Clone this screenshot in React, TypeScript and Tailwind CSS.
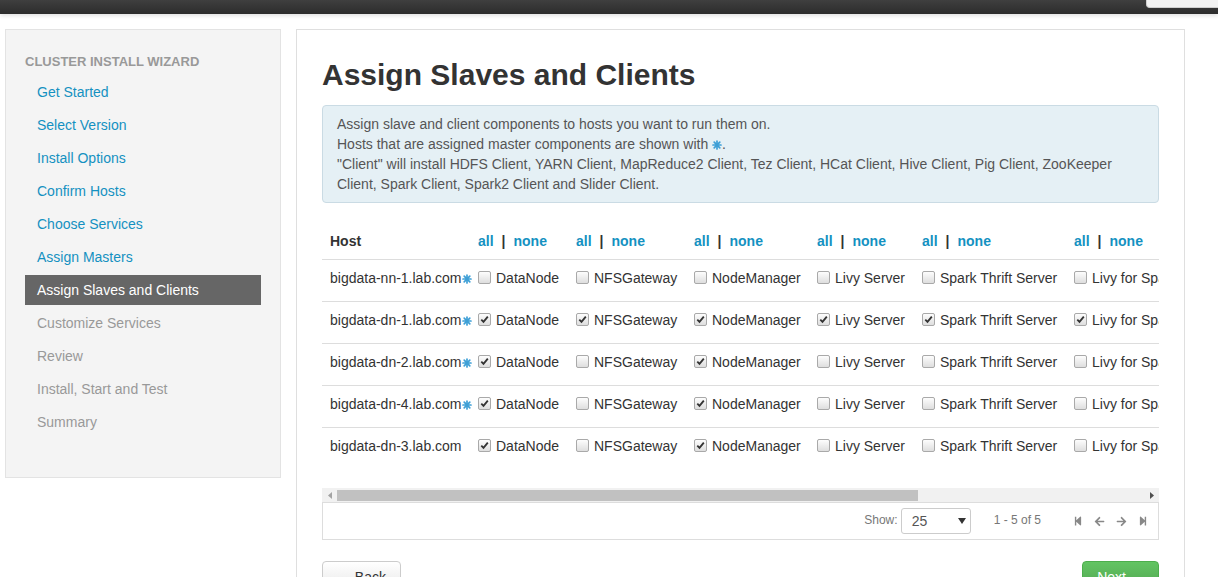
import { FaArrowLeft, FaArrowRight, FaStepBackward, FaStepForward } from "react-icons/fa";

const steps = [
  { label: "Get Started", state: "done" },
  { label: "Select Version", state: "done" },
  { label: "Install Options", state: "done" },
  { label: "Confirm Hosts", state: "done" },
  { label: "Choose Services", state: "done" },
  { label: "Assign Masters", state: "done" },
  { label: "Assign Slaves and Clients", state: "active" },
  { label: "Customize Services", state: "todo" },
  { label: "Review", state: "todo" },
  { label: "Install, Start and Test", state: "todo" },
  { label: "Summary", state: "todo" },
];

const columns = [
  { name: "DataNode", width: "w-[98px]" },
  { name: "NFSGateway", width: "w-[118px]" },
  { name: "NodeManager", width: "w-[123px]" },
  { name: "Livy Server", width: "w-[105px]" },
  { name: "Spark Thrift Server", width: "w-[152px]" },
  { name: "Livy for Spark2 Server", width: "w-[200px]" },
];

const hosts = [
  { name: "bigdata-nn-1.lab.com", master: true, checks: [false, false, false, false, false, false] },
  { name: "bigdata-dn-1.lab.com", master: true, checks: [true, true, true, true, true, true] },
  { name: "bigdata-dn-2.lab.com", master: true, checks: [true, false, true, false, false, false] },
  { name: "bigdata-dn-4.lab.com", master: true, checks: [true, false, true, false, false, false] },
  { name: "bigdata-dn-3.lab.com", master: false, checks: [true, false, true, false, false, false] },
];

function MasterStar() {
  return (
    <svg width="10" height="10" viewBox="0 0 10 10" className="inline-block align-[-1px]">
      <g stroke="#3d9fd6" strokeWidth="1.7" strokeLinecap="round">
        <line x1="5" y1="1" x2="5" y2="9" />
        <line x1="1" y1="5" x2="9" y2="5" />
        <line x1="2.2" y1="2.2" x2="7.8" y2="7.8" />
        <line x1="7.8" y1="2.2" x2="2.2" y2="7.8" />
      </g>
      <circle cx="5" cy="5" r="1.6" fill="#3d9fd6" />
    </svg>
  );
}

function Checkbox({ checked }: { checked: boolean }) {
  return (
    <span className="inline-flex h-[13px] w-[13px] shrink-0 items-center justify-center rounded-[2px] border border-[#a9a9a9] bg-gradient-to-b from-[#fdfdfd] to-[#dedede]">
      {checked && (
        <svg width="9" height="9" viewBox="0 0 9 9">
          <path d="M1.3 4.6 L3.5 6.9 L7.8 1.6" fill="none" stroke="#333" strokeWidth="1.8" />
        </svg>
      )}
    </span>
  );
}

export default function App() {
  return (
    <div className="min-h-screen bg-white font-['Liberation_Sans',Arial,sans-serif] text-sm text-[#333]">
      <div className="flex h-[14px] justify-end bg-gradient-to-b from-[#3f3f3f] to-[#2c2c2c] shadow-[0_2px_4px_rgba(0,0,0,0.12)]">
        <div className="h-[8px] w-[72px] rounded-bl-[4px] border-b border-l border-[#cfcfcf] bg-[#f2f2f2]" />
      </div>

      <div className="flex items-start gap-[15px] pl-[5px] pt-[15px]">
        <aside className="h-[449px] w-[276px] shrink-0 border border-[#e3e3e3] bg-[#f4f4f4] px-[19px] pt-[22px]">
          <div className="mb-[5px] h-[20px] text-[13px] font-bold leading-[20px] text-[#999]">
            CLUSTER INSTALL WIZARD
          </div>
          <ul>
            {steps.map((s) => (
              <li
                key={s.label}
                className={
                  s.state === "active"
                    ? "mb-[3px] h-[30px] bg-[#666] px-[12px] leading-[30px] text-white"
                    : s.state === "done"
                    ? "mb-[3px] h-[30px] px-[12px] leading-[30px] text-[#1491c1]"
                    : "mb-[3px] h-[30px] px-[12px] leading-[30px] text-[#999]"
                }
              >
                {s.label}
              </li>
            ))}
          </ul>
        </aside>

        <main className="w-[889px] shrink-0 border border-[#dfdfdf] bg-white px-[25px] pb-[40px] pt-[28px]">
          <h2 className="mb-[14px] h-[33px] text-[30px] font-bold leading-[33px] text-[#333]">
            Assign Slaves and Clients
          </h2>

          <div className="mb-[20px] rounded-[4px] border border-[#cadbe4] bg-[#e5f0f5] py-[8px] pl-[14px] pr-[35px] leading-[20px] text-[#555]">
            Assign slave and client components to hosts you want to run them on.
            <br />
            Hosts that are assigned master components are shown with <MasterStar />.
            <br />
            "Client" will install HDFS Client, YARN Client, MapReduce2 Client, Tez Client, HCat Client, Hive Client, Pig Client, ZooKeeper
            <br />
            Client, Spark Client, Spark2 Client and Slider Client.
          </div>

          <div className="overflow-hidden">
            <table className="mb-[19px] w-[944px] table-fixed border-collapse">
              <colgroup>
                <col className="w-[148px]" />
                {columns.map((c) => (
                  <col key={c.name} className={c.width} />
                ))}
              </colgroup>
              <thead>
                <tr>
                  <th className="h-[36px] px-[8px] text-left align-middle font-bold">Host</th>
                  {columns.map((c) => (
                    <th key={c.name} className="h-[36px] whitespace-nowrap px-[8px] text-left align-middle font-bold">
                      <span className="text-[#1491c1]">all</span>
                      <span className="mx-[8px]">|</span>
                      <span className="text-[#1491c1]">none</span>
                    </th>
                  ))}
                </tr>
              </thead>
              <tbody>
                {hosts.map((h) => (
                  <tr key={h.name} className="border-t border-[#dddddd]">
                    <td className="h-[42px] whitespace-nowrap pl-[8px] pt-[8px] align-top leading-[20px]">
                      {h.name}
                      {h.master && <MasterStar />}
                    </td>
                    {columns.map((c, i) => (
                      <td key={c.name} className="h-[42px] whitespace-nowrap px-[8px] pt-[8px] align-top leading-[20px]">
                        <div className="flex h-[20px] items-center gap-[5px]">
                          <Checkbox checked={h.checks[i]} />
                          <span>{c.name}</span>
                        </div>
                      </td>
                    ))}
                  </tr>
                ))}
              </tbody>
            </table>
          </div>

          <div className="flex h-[14px] items-center bg-[#f1f1f1]">
            <div className="flex w-[15px] justify-center">
              <svg width="4" height="7" viewBox="0 0 4 7">
                <path d="M4 0 L0 3.5 L4 7 Z" fill="#a3a3a3" />
              </svg>
            </div>
            <div className="h-[11px] w-[581px] bg-[#c1c1c1]" />
            <div className="flex-1" />
            <div className="flex w-[15px] justify-center">
              <svg width="4" height="7" viewBox="0 0 4 7">
                <path d="M0 0 L4 3.5 L0 7 Z" fill="#505050" />
              </svg>
            </div>
          </div>

          <div className="flex h-[38px] items-center justify-end border border-[#dddddd] pr-[10px] text-[12px] text-[#777]">
            <span className="mr-[3px]">Show:</span>
            <div className="flex h-[26px] w-[70px] items-center justify-between rounded-[3px] border border-[#cccccc] pl-[10px] pr-[4px] text-[14px] text-[#555]">
              <span>25</span>
              <svg width="8" height="6" viewBox="0 0 8 6">
                <path d="M0 0 L8 0 L4 6 Z" fill="#333" />
              </svg>
            </div>
            <span className="ml-[23px] mr-[32px]">1 - 5 of 5</span>
            <div className="flex items-center gap-[11px] text-[#888]">
              <FaStepBackward size={10} />
              <FaArrowLeft size={11} />
              <FaArrowRight size={11} />
              <FaStepForward size={10} />
            </div>
          </div>

          <div className="mt-[21px] flex justify-between">
            <button className="h-[32px] w-[79px] rounded-[4px] border border-[#cccccc] bg-gradient-to-b from-white to-[#e6e6e6] text-[14px] text-[#333]">
              ← Back
            </button>
            <button className="h-[32px] w-[77px] rounded-[4px] border border-[#4cae4c] bg-gradient-to-b from-[#62c462] to-[#51a351] text-[14px] text-white">
              Next →
            </button>
          </div>
        </main>
      </div>
    </div>
  );
}
